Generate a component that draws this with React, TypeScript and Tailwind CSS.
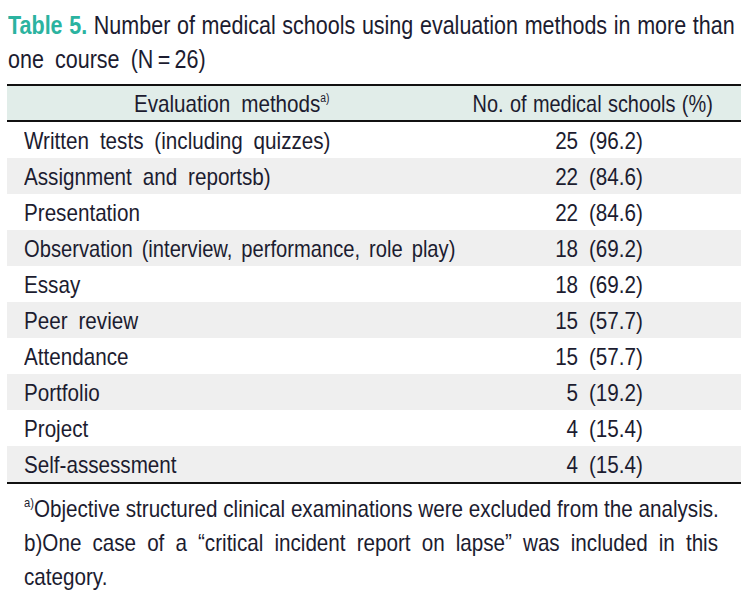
import React from "react";

const rows: [string, string][] = [
  ["Written tests (including quizzes)", "25 (96.2)"],
  ["Assignment and reportsb)", "22 (84.6)"],
  ["Presentation", "22 (84.6)"],
  ["Observation (interview, performance, role play)", "18 (69.2)"],
  ["Essay", "18 (69.2)"],
  ["Peer review", "15 (57.7)"],
  ["Attendance", "15 (57.7)"],
  ["Portfolio", "\u20075 (19.2)"],
  ["Project", "\u20074 (15.4)"],
  ["Self-assessment", "\u20074 (15.4)"],
];

function L({ children, tight }: { children: React.ReactNode; tight?: boolean }) {
  return (
    <span
      className={
        tight
          ? "inline-block whitespace-nowrap origin-left scale-x-[0.84] [word-spacing:4px]"
          : "inline-block whitespace-nowrap origin-left scale-x-[0.86] [word-spacing:6px]"
      }
    >
      {children}
    </span>
  );
}

function C({ children, tight }: { children: React.ReactNode; tight?: boolean }) {
  return (
    <span
      className={
        tight
          ? "inline-block whitespace-nowrap origin-center scale-x-[0.83] [word-spacing:1px]"
          : "inline-block whitespace-nowrap origin-center scale-x-[0.86] [word-spacing:6px]"
      }
    >
      {children}
    </span>
  );
}

export default function App() {
  return (
    <div
      className="w-[741px] h-[605px] bg-white text-[#1c1c30] overflow-hidden"
      style={{ fontFamily: '"Liberation Sans", Arial, sans-serif' }}
    >
      <div className="pl-[8px] pt-[8px] text-[25px] leading-[34px]">
        <div className="w-[727px]">
          <div className="w-[845px] origin-left scale-x-[0.86] whitespace-nowrap text-justify [text-align-last:justify]">
            <span className="font-bold text-[#2bb3a0]">Table 5.</span> Number of medical schools using evaluation methods in more than
          </div>
        </div>
        <div>
          <L>one course (N{"\u2009"}={"\u2009"}26)</L>
        </div>
      </div>
      <div className="ml-[7px] mt-[8px] text-[24px] leading-[28px]">
        <div className="flex h-[38px] items-center pt-[2px] border-t-2 border-b-2 border-[#111] bg-[#e1ede9]">
          <div className="w-[456px] text-center pl-[8px]">
            <C>
              Evaluation methods<sup className="text-[12px] relative -top-[10px]">a)</sup>
            </C>
          </div>
          <div className="flex-1 text-center pr-[4px]">
            <C tight>No. of medical schools (%)</C>
          </div>
        </div>
        {rows.map(([a, b], i) => (
          <div
            key={a}
            className={`flex h-[36px] items-center pt-[1px] ${i % 2 === 1 ? "bg-[#efefef]" : "bg-white"}`}
          >
            <div className="w-[456px] pl-[17px]">
              {i === 3 ? <L tight>{a}</L> : <L>{a}</L>}
            </div>
            <div className="flex-1 text-center pr-[6px]">
              <C>{b}</C>
            </div>
          </div>
        ))}
        <div className="border-t-2 border-[#111]" />
      </div>
      <div className="pl-[24px] pt-[8px] text-[24px] leading-[34px]">
        <div className="w-[694px]">
          <div className="w-[807px] origin-left scale-x-[0.86] whitespace-nowrap text-justify [text-align-last:justify]">
            <sup className="text-[13px] relative -top-[10px]">a)</sup>Objective structured clinical examinations were excluded from the analysis.
          </div>
        </div>
        <div className="w-[694px]">
          <div className="w-[807px] origin-left scale-x-[0.86] whitespace-nowrap text-justify [text-align-last:justify]">
            b)One case of a “critical incident report on lapse” was included in this
          </div>
        </div>
        <div>
          <L>category.</L>
        </div>
      </div>
    </div>
  );
}
